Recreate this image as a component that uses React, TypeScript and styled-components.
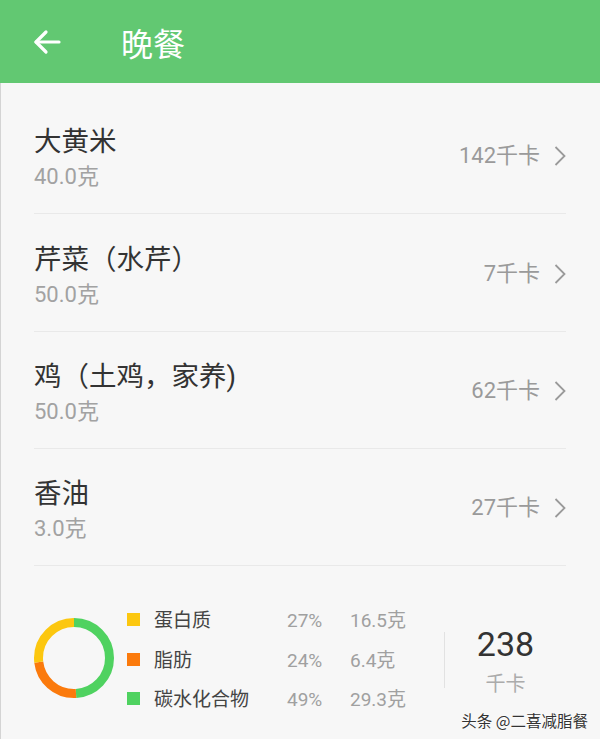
import React from "react";
import styled, { createGlobalStyle } from "styled-components";

const GlobalStyle = createGlobalStyle`
  html, body { margin: 0; padding: 0; background: #f7f7f7; }
  body { font-family: Roboto, "Noto Sans CJK SC", "Noto Sans", sans-serif; }
  * { box-sizing: border-box; }
`;

const Page = styled.div`
  width: 600px;
  height: 739px;
  position: relative;
  overflow: hidden;
  background: #f7f7f7;
`;

const Header = styled.header`
  height: 83px;
  background: #62c872;
  display: flex;
  align-items: center;
  padding-left: 33px;
`;

const BackButton = styled.div`
  width: 28px;
  height: 28px;
  display: flex;
  align-items: center;
  justify-content: center;
  margin-right: 60px;
`;

const Title = styled.h1`
  margin: 0;
  color: #ffffff;
  font-size: 32px;
  font-weight: 400;
  line-height: 40px;
  font-family: "Noto Sans CJK SC", sans-serif;
`;

const Body = styled.div`
  border-left: 1px solid #d4d4d4;
  height: 656px;
`;

const List = styled.div`
  padding: 13px 34px 0 33px;
`;

const Row = styled.div<{ $h: number }>`
  height: ${(p) => p.$h}px;
  border-bottom: 1px solid #e9e9e9;
  display: flex;
  align-items: center;
  justify-content: space-between;
`;

const Info = styled.div`
  display: flex;
  flex-direction: column;
  gap: 5px;
  padding-top: 7px;
`;

const Name = styled.div`
  font-size: 27.5px;
  line-height: 32px;
  color: #333333;
`;

const Amount = styled.div`
  font-size: 22px;
  line-height: 28px;
  color: #a2a2a2;
`;

const Kcal = styled.div`
  display: flex;
  align-items: center;
  gap: 14px;
  font-size: 22px;
  color: #9a9a9a;
  line-height: 28px;
  padding-top: 2px;
`;

const Summary = styled.div`
  display: flex;
  align-items: center;
  padding: 35px 34px 0 32px;
`;

const Donut = styled.svg`
  flex: none;
  margin-right: 12px;
  margin-top: -4px;
`;

const Legend = styled.div`
  display: grid;
  grid-template-columns: 13px 147px 63px 94px;
  align-items: center;
`;

const Swatch = styled.span<{ $color: string }>`
  width: 13px;
  height: 13px;
  background: ${(p) => p.$color};
  display: block;
  margin-top: -2px;
`;

const LegendLabel = styled.span`
  font-size: 19px;
  line-height: 39.5px;
  color: #444444;
  padding-left: 14px;
`;

const LegendValue = styled.span`
  font-size: 19px;
  line-height: 39.5px;
  color: #a0a0a0;
`;

const TotalBox = styled.div`
  flex: 1;
  border-left: 1px solid #e2e2e2;
  height: 56px;
  display: flex;
  flex-direction: column;
  align-items: center;
  justify-content: center;
  gap: 8px;
`;

const TotalNumber = styled.div`
  font-size: 34px;
  line-height: 40px;
  color: #333333;
`;

const TotalUnit = styled.div`
  font-size: 20px;
  line-height: 24px;
  color: #ababab;
`;

const Watermark = styled.div`
  position: absolute;
  right: 12px;
  bottom: 9px;
  font-size: 15.5px;
  line-height: 20px;
  color: #333333;
  font-family: "Noto Sans CJK SC", sans-serif;
  text-shadow: 0 0 2px #ffffff, 0 0 2px #ffffff;
`;

const foods = [
  { name: "大黄米", amount: "40.0克", kcal: "142千卡", h: 118 },
  { name: "芹菜（水芹）", amount: "50.0克", kcal: "7千卡", h: 118 },
  { name: "鸡（土鸡，家养)", amount: "50.0克", kcal: "62千卡", h: 117 },
  { name: "香油", amount: "3.0克", kcal: "27千卡", h: 117 },
];

const nutrients = [
  { label: "蛋白质", pct: "27%", grams: "16.5克", color: "#fcc70f" },
  { label: "脂肪", pct: "24%", grams: "6.4克", color: "#fb7a0c" },
  { label: "碳水化合物", pct: "49%", grams: "29.3克", color: "#4fd260" },
];

const Chevron = () => (
  <svg width="12" height="20" viewBox="0 0 12 20">
    <polyline points="1.5,1 10.5,10 1.5,19" fill="none" stroke="#9a9a9a" strokeWidth="1.8" />
  </svg>
);

const BackArrow = () => (
  <svg width="28" height="26" viewBox="0 0 28 26">
    <g fill="none" stroke="#ffffff" strokeWidth="3.2" strokeLinecap="round" strokeLinejoin="round">
      <line x1="3" y1="13" x2="26" y2="13" />
      <polyline points="13,3 3,13 13,23" />
    </g>
  </svg>
);

const DonutChart = () => {
  const r = 35.5;
  const c = 2 * Math.PI * r;
  const segs = [
    { v: 0.49, color: "#4fd260" },
    { v: 0.24, color: "#fb7a0c" },
    { v: 0.27, color: "#fcc70f" },
  ];
  let offset = 0;
  return (
    <Donut width="82" height="82" viewBox="0 0 82 82">
      <g transform="rotate(-90 41 41)">
        {segs.map((s, i) => {
          const el = (
            <circle
              key={i}
              cx="41"
              cy="41"
              r={r}
              fill="none"
              stroke={s.color}
              strokeWidth="9"
              strokeDasharray={`${s.v * c} ${c}`}
              strokeDashoffset={-offset * c}
            />
          );
          offset += s.v;
          return el;
        })}
      </g>
    </Donut>
  );
};

export default function App() {
  return (
    <>
      <GlobalStyle />
      <Page>
        <Header>
          <BackButton>
            <BackArrow />
          </BackButton>
          <Title>晚餐</Title>
        </Header>
        <Body>
          <List>
            {foods.map((f) => (
              <Row key={f.name} $h={f.h}>
                <Info>
                  <Name>{f.name}</Name>
                  <Amount>{f.amount}</Amount>
                </Info>
                <Kcal>
                  <span>{f.kcal}</span>
                  <Chevron />
                </Kcal>
              </Row>
            ))}
          </List>
          <Summary>
            <DonutChart />
            <Legend>
              {nutrients.map((n) => (
                <React.Fragment key={n.label}>
                  <Swatch $color={n.color} />
                  <LegendLabel>{n.label}</LegendLabel>
                  <LegendValue>{n.pct}</LegendValue>
                  <LegendValue>{n.grams}</LegendValue>
                </React.Fragment>
              ))}
            </Legend>
            <TotalBox>
              <TotalNumber>238</TotalNumber>
              <TotalUnit>千卡</TotalUnit>
            </TotalBox>
          </Summary>
        </Body>
        <Watermark>头条 @二喜减脂餐</Watermark>
      </Page>
    </>
  );
}
